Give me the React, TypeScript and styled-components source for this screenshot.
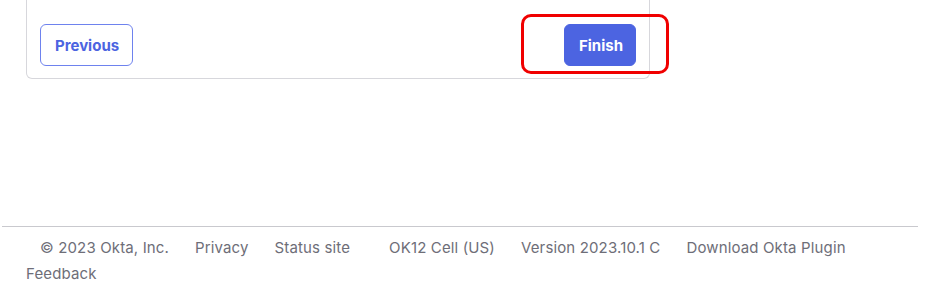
import React from 'react';
import styled, {createGlobalStyle} from 'styled-components';

const GlobalStyle = createGlobalStyle`
  html, body {
    margin: 0;
    padding: 0;
    background: #ffffff;
    font-family: Inter, "Noto Sans", sans-serif;
  }
`;

const footerLinks = ['Privacy', 'Status site'];

export default function App() {
  return (
    <>
      <GlobalStyle/>
      <Page>
        <Card>
          <Actions>
            <SecondaryButton>Previous</SecondaryButton>
            <Highlighted>
              <PrimaryButton>Finish</PrimaryButton>
              <Annotation/>
            </Highlighted>
          </Actions>
        </Card>
        <Footer>
          <Copyright>© 2023 Okta, Inc.</Copyright>
          {footerLinks.map(link => <FooterItem key={link}>{link}</FooterItem>)}
          <FooterItem $extraSpace>OK12 Cell (US)</FooterItem>
          <FooterItem>Version 2023.10.1 C</FooterItem>
          <FooterItem>Download Okta Plugin</FooterItem>
          <FooterItem>Feedback</FooterItem>
        </Footer>
      </Page>
    </>
  );
}

const Page = styled.div`
  width: 928px;
  height: 288px;
  overflow: hidden;
`;

const Card = styled.div`
  width: 624px;
  margin-left: 26px;
  border: 1px solid #d7d7dc;
  border-top: 0;
  border-radius: 0 0 6px 6px;
  box-sizing: border-box;
  padding: 24px 13px 12px;
`;

const Actions = styled.div`
  display: flex;
  justify-content: space-between;
  align-items: center;
`;

const Highlighted = styled.div`
  position: relative;
  display: flex;
`;

const Annotation = styled.div`
  position: absolute;
  left: -43px;
  top: -10px;
  right: -33px;
  bottom: -8px;
  border: 3px solid #f00000;
  border-radius: 10px;
  pointer-events: none;
`;

const BaseButton = styled.button`
  height: 42px;
  padding: 0 14px;
  border-radius: 6px;
  font-family: Inter, "Noto Sans", sans-serif;
  font-size: 15px;
  font-weight: 700;
  box-sizing: border-box;
  cursor: pointer;
`;

const SecondaryButton = styled(BaseButton)`
  width: 93px;
  background: #ffffff;
  color: #4c64e1;
  border: 1px solid #6e82ee;
`;

const PrimaryButton = styled(BaseButton)`
  width: 72px;
  background: #4c64e1;
  color: #ffffff;
  border: 1px solid #4c64e1;
`;

const Footer = styled.footer`
  margin: 147px 10px 0 2px;
  border-top: 1px solid #c9c9ce;
  padding: 8px 0 0 24px;
  display: flex;
  flex-wrap: wrap;
  column-gap: 26px;
  font-size: 15px;
  letter-spacing: 0.14px;
  line-height: 26px;
  color: #6e6e78;
`;

const FooterItem = styled.span<{$extraSpace?: boolean}>`
  white-space: nowrap;
  margin-left: ${p => (p.$extraSpace ? '13px' : '0')};
`;

const Copyright = styled(FooterItem)`
  padding-left: 14px;
`;
